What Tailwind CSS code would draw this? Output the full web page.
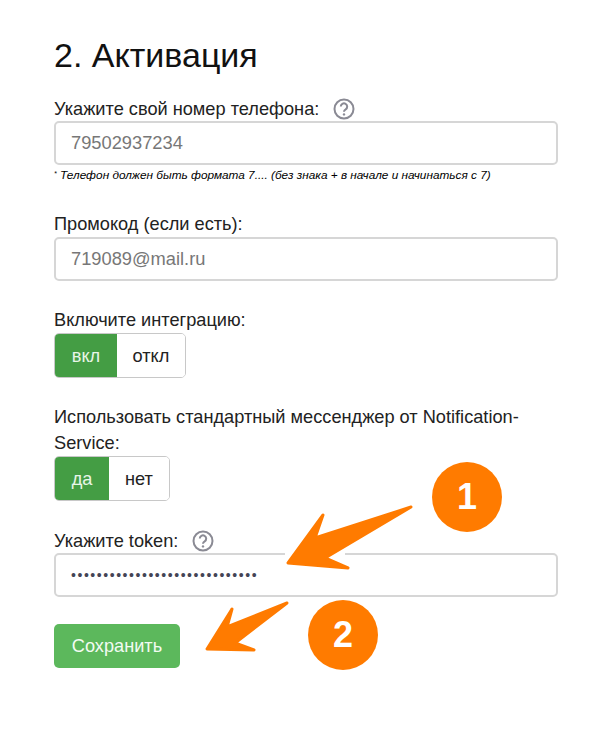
<!DOCTYPE html>
<html lang="en">
<head>
    <meta charset="UTF-8">
    <title>Активация</title>
    <script src="https://cdn.jsdelivr.net/npm/@tailwindcss/browser@4"></script>
</head>
<body class="bg-white">
    <div class="relative w-[600px] h-[737px] overflow-hidden pl-[54px] pr-[42px] pt-[35px] font-['Liberation_Sans',Arial,sans-serif] text-[18.2px] leading-[24px] text-[#222]">
        <h1 class="text-[34px] leading-[40px] font-normal text-[#111] mb-[21px]">2. Активация</h1>

        <!-- Phone -->
        <div class="flex items-center gap-[14px] h-[25px]">
            <label>Укажите свой номер телефона:</label>
            <svg width="22" height="22" viewBox="0 0 22 22" fill="none">
                <circle cx="11" cy="11" r="9.5" stroke="#8a8a94" stroke-width="2"></circle>
                <path d="M7.8 8.6a3.2 3.2 0 1 1 4.9 2.7c-1.1.7-1.7 1.2-1.7 2.5" stroke="#8a8a94" stroke-width="2" fill="none"></path>
                <circle cx="11" cy="16.4" r="1.2" fill="#8a8a94"></circle>
            </svg>
        </div>
        <div class="h-[44px] rounded-[5px] border-2 border-[#d6d6d6] flex items-center px-[15px] text-[#777] text-[18.3px]">79502937234</div>
        <p class="text-[11.8px] leading-[14px] italic text-black mt-[3px] mb-[30px]"><sup class="text-[7px]">*</sup> Телефон должен быть формата 7.... (без знака + в начале и начинаться с 7)</p>

        <!-- Promo -->
        <label class="block h-[25px]">Промокод (если есть):</label>
        <div class="h-[44px] rounded-[5px] border-2 border-[#d6d6d6] flex items-center px-[15px] text-[#777] text-[18.3px] mb-[27px]">719089@mail.ru</div>

        <!-- Integration -->
        <label class="block h-[25px]">Включите интеграцию:</label>
        <div class="flex w-[132px] h-[45px] rounded-[5px] border border-[#c8c8c8] overflow-hidden mb-[26px]">
            <div class="w-[62px] bg-[#449d44] text-[#e8f5e8] flex items-center justify-center">вкл</div>
            <div class="flex-1 bg-white text-[#222] flex items-center justify-center">откл</div>
        </div>

        <!-- Messenger -->
        <label class="block leading-[26px] mb-[-2px]">Использовать стандартный мессенджер от Notification-Service:</label>
        <div class="flex w-[116px] h-[45px] rounded-[5px] border border-[#c8c8c8] overflow-hidden mt-[2px] mb-[27px]">
            <div class="w-[54px] bg-[#449d44] text-[#e8f5e8] flex items-center justify-center">да</div>
            <div class="flex-1 bg-white text-[#222] flex items-center justify-center">нет</div>
        </div>

        <!-- Token -->
        <div class="flex items-center gap-[14px] h-[25px]">
            <label>Укажите token:</label>
            <svg width="22" height="22" viewBox="0 0 22 22" fill="none">
                <circle cx="11" cy="11" r="9.5" stroke="#8a8a94" stroke-width="2"></circle>
                <path d="M7.8 8.6a3.2 3.2 0 1 1 4.9 2.7c-1.1.7-1.7 1.2-1.7 2.5" stroke="#8a8a94" stroke-width="2" fill="none"></path>
                <circle cx="11" cy="16.4" r="1.2" fill="#8a8a94"></circle>
            </svg>
        </div>
        <div class="h-[44px] rounded-[5px] border-2 border-[#d6d6d6] flex items-center px-[15px] text-[#445] text-[14px] tracking-[1.55px] mb-[27px]">•••••••••••••••••••••••••••••</div>

        <button class="w-[126px] h-[44px] rounded-[5px] bg-[#5cb85c] text-[#f2fbf2] text-center">Сохранить</button>

        <!-- Annotations over the form -->
        <svg class="absolute left-0 top-0" width="600" height="737" viewBox="0 0 600 737" fill="#ff7b00" stroke="#ff7b00" stroke-width="3" stroke-linejoin="round">
            <line x1="285" y1="554" x2="345" y2="554" stroke="#fff" stroke-width="4"></line>
            <polygon points="288,563 323,515 315,538 411,507 325,558 348,568"></polygon>
            <polygon points="207,649 232,609 227,627 287,603 235,643 254,650"></polygon>
        </svg>
        <div class="absolute left-[432px] top-[462px] w-[70px] h-[70px] rounded-full bg-[#ff7b00] text-white font-bold text-[36px] flex items-center justify-center">1</div>
        <div class="absolute left-[308px] top-[600px] w-[70px] h-[70px] rounded-full bg-[#ff7b00] text-white font-bold text-[36px] flex items-center justify-center">2</div>
    </div>
</body>
</html>
